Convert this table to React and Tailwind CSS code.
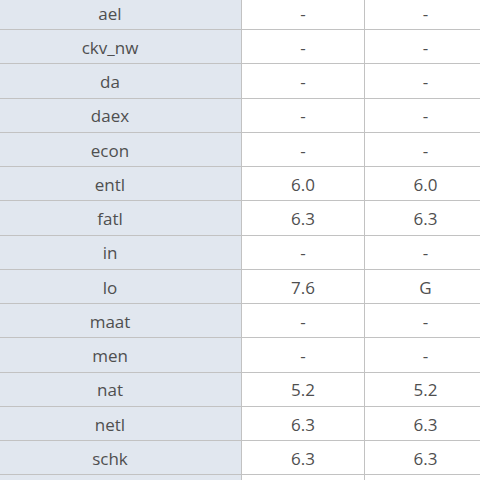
import React from "react";

const rows = [
  ["ael", "-", "-"],
  ["ckv_nw", "-", "-"],
  ["da", "-", "-"],
  ["daex", "-", "-"],
  ["econ", "-", "-"],
  ["entl", "6.0", "6.0"],
  ["fatl", "6.3", "6.3"],
  ["in", "-", "-"],
  ["lo", "7.6", "G"],
  ["maat", "-", "-"],
  ["men", "-", "-"],
  ["nat", "5.2", "5.2"],
  ["netl", "6.3", "6.3"],
  ["schk", "6.3", "6.3"],
  ["", "", ""],
];

export default function App() {
  return (
    <div
      className="w-[480px] h-[480px] overflow-hidden bg-white"
      style={{ fontFamily: '"Open Sans", sans-serif' }}
    >
      <div className="-ml-[21px] -mt-[4.25px] w-[530px]">
        {rows.map((r, i) => (
          <div key={i} className="flex h-[34.25px] border-b border-[#c2c2c2] text-[17px]">
            <div className="w-[263px] shrink-0 bg-[#e1e7ef] border-r border-[#c2c2c2] flex items-center justify-center pt-[2px] text-[#4f4f4f]">
              {r[0]}
            </div>
            <div className="w-[123px] shrink-0 border-r border-[#c2c2c2] flex items-center justify-center pt-[2px] text-[#4f4f4f]">
              {r[1]}
            </div>
            <div className="w-[122px] shrink-0 border-r border-[#c2c2c2] flex items-center justify-center pt-[2px] text-[#4f4f4f]">
              {r[2]}
            </div>
          </div>
        ))}
      </div>
    </div>
  );
}
